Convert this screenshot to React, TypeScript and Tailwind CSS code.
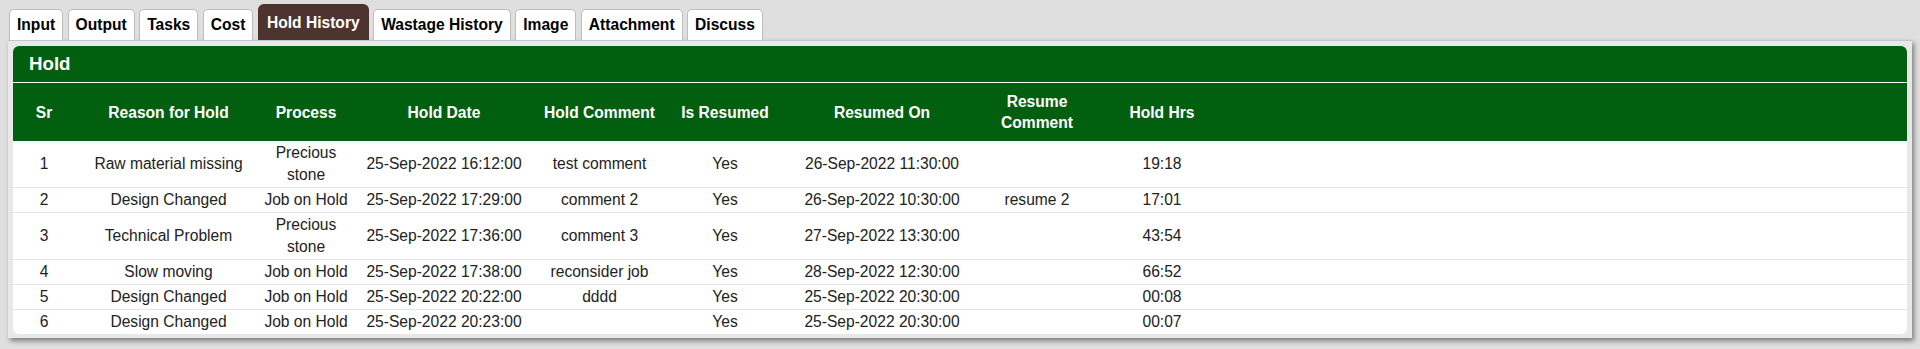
import React from "react";

const tabs = ["Input", "Output", "Tasks", "Cost", "Hold History", "Wastage History", "Image", "Attachment", "Discuss"];
const activeTab = "Hold History";

const columns = [
  { label: "Sr", w: "w-[62px]" },
  { label: "Reason for Hold", w: "w-[187px]" },
  { label: "Process", w: "w-[88px]" },
  { label: "Hold Date", w: "w-[188px]" },
  { label: "Hold Comment", w: "w-[123px]" },
  { label: "Is Resumed", w: "w-[128px]" },
  { label: "Resumed On", w: "w-[186px]" },
  { label: "Resume Comment", w: "w-[124px]" },
  { label: "Hold Hrs", w: "w-[126px]" },
  { label: "", w: "" },
];

const rows = [
  ["1", "Raw material missing", "Precious stone", "25-Sep-2022 16:12:00", "test comment", "Yes", "26-Sep-2022 11:30:00", "", "19:18"],
  ["2", "Design Changed", "Job on Hold", "25-Sep-2022 17:29:00", "comment 2", "Yes", "26-Sep-2022 10:30:00", "resume 2", "17:01"],
  ["3", "Technical Problem", "Precious stone", "25-Sep-2022 17:36:00", "comment 3", "Yes", "27-Sep-2022 13:30:00", "", "43:54"],
  ["4", "Slow moving", "Job on Hold", "25-Sep-2022 17:38:00", "reconsider job", "Yes", "28-Sep-2022 12:30:00", "", "66:52"],
  ["5", "Design Changed", "Job on Hold", "25-Sep-2022 20:22:00", "dddd", "Yes", "25-Sep-2022 20:30:00", "", "00:08"],
  ["6", "Design Changed", "Job on Hold", "25-Sep-2022 20:23:00", "", "Yes", "25-Sep-2022 20:30:00", "", "00:07"],
];

export default function App() {
  return (
    <div className="min-h-[349px] bg-[#dfdfdf] pb-[10px] font-['Liberation_Sans',Arial,sans-serif]">
      {/* tab strip */}
      <div className="flex items-end gap-[4.5px] pl-[9px] pt-[4px]">
        {tabs.map((t) =>
          t === activeTab ? (
            <button
              key={t}
              className="h-[36px] rounded-t-[6px] border border-b-0 border-[#4a3129] bg-[#4e342e] px-[8px] text-[15.6px] font-bold text-white"
            >
              {t}
            </button>
          ) : (
            <button
              key={t}
              className="h-[31px] rounded-t-[5px] border border-b-0 border-[#bdbdbd] bg-white px-[7px] text-[15.6px] font-bold text-black"
            >
              {t}
            </button>
          )
        )}
      </div>

      {/* panel */}
      <div className="mx-[8px] border-t border-[#c4c4c4] bg-[#e8e8e8] px-[5px] pb-[4px] pt-[5px] shadow-[2px_3px_5px_rgba(0,0,0,0.45)]">
        <div className="overflow-hidden rounded-[6px] bg-white">
          <div className="flex h-[37px] items-center border-b border-white bg-[#035f10] pl-[16px] text-[18.7px] font-bold text-white">
            Hold
          </div>
          <table className="w-full table-fixed border-collapse text-center text-[15.6px]">
            <thead>
              <tr className="bg-[#035f10] text-white">
                {columns.map((c, i) => (
                  <th key={i} className={`${c.w} px-[1px] py-[8px] font-bold leading-[21px]`}>
                    {c.label}
                  </th>
                ))}
              </tr>
            </thead>
            <tbody className="text-[#222]">
              {rows.map((r, i) => (
                <tr key={i} className={i === 0 ? "" : "border-t border-[#e6e6e6]"}>
                  {r.map((cell, j) => (
                    <td key={j} className="px-[1px] py-[1px] leading-[22px]">
                      {cell}
                    </td>
                  ))}
                  <td></td>
                </tr>
              ))}
            </tbody>
          </table>
        </div>
      </div>
    </div>
  );
}
